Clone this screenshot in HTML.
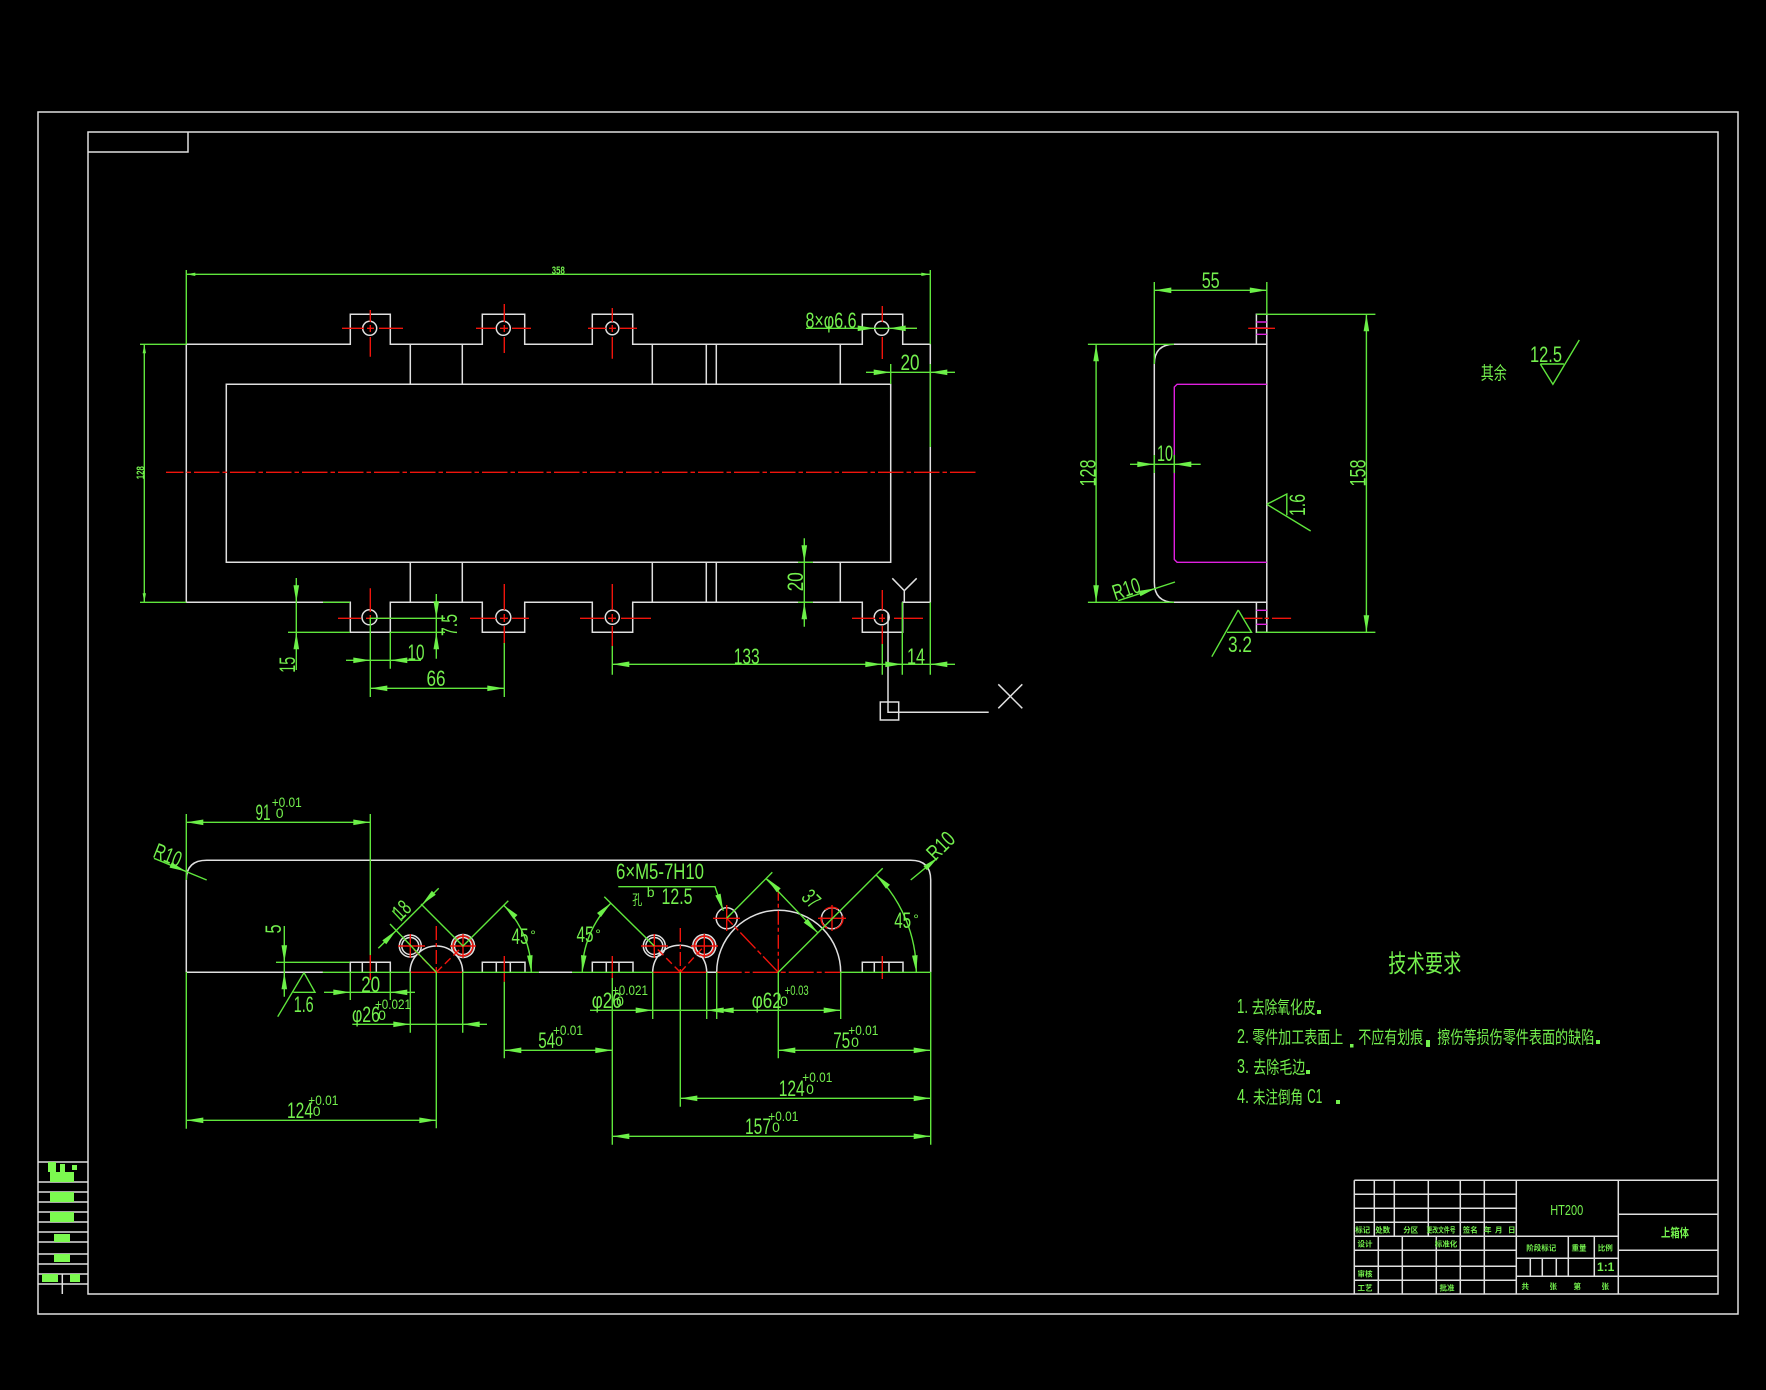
<!DOCTYPE html>
<html lang="zh">
<head>
<meta charset="utf-8">
<title>上箱体</title>
<style>
html,body{margin:0;padding:0;background:#000;width:1766px;height:1390px;overflow:hidden}
svg{display:block}
.w{stroke:#e0e0e0;stroke-width:1.5;fill:none}
.g{stroke:#5fe63c;stroke-width:1.4;fill:none}
.r{stroke:#f0140c;stroke-width:1.4;fill:none}
.m{stroke:#e020e0;stroke-width:1.4;fill:none}
text{font-family:"Liberation Sans","Noto Sans CJK SC",sans-serif;fill:#74f04e;font-size:22px;text-anchor:middle}
.s{font-size:14px}
.tb{font-size:7.5px;font-weight:bold}
.c{font-size:13px;text-anchor:start}
</style>
</head>
<body>
<svg width="1766" height="1390" viewBox="0 0 1766 1390" xmlns="http://www.w3.org/2000/svg">
<defs>
<path id="a" d="M0 0L-17 -2.8V2.8Z" fill="#6cf048"/>
<path id="b" d="M0 0L-9 -1.7V1.7Z" fill="#6cf048"/>
</defs>
<rect width="1766" height="1390" fill="#000"/>

<!-- frame -->
<path class="w" d="M38 112H1738V1314H38ZM88 132H1718V1294H88ZM88 152H188V132"/>
<path class="w" d="M38 1162H88M38 1182H88M38 1192H88M38 1202H88M38 1212H88M38 1222H88M38 1232H88M38 1242H88M38 1254H88M38 1264H88M38 1274H88M38 1284H88M62.3 1274V1294"/>
<g fill="#7cfa50">
<rect x="48" y="1162" width="8" height="10"/><rect x="50" y="1172" width="24" height="10"/><rect x="72" y="1165" width="5" height="5"/><rect x="60" y="1164" width="5" height="8"/>
<rect x="50" y="1192" width="24" height="10"/><rect x="50" y="1212" width="24" height="10"/><rect x="54" y="1234" width="16" height="8"/><rect x="54" y="1254" width="16" height="8"/><rect x="42" y="1274" width="16" height="8"/><rect x="70" y="1274" width="10" height="8"/>
</g>

<!-- top view white -->
<path class="w" d="M186.3 344.3H350.3V314.3H390.3V344.3H482.3V314.3H524.7V344.3H592.3V314.3H632.7V344.3H862.3V314.3H902.7V344.3H930.3V602.3H902.7V632.3H862.3V602.3H632.7V632.3H592.3V602.3H524.7V632.3H482.3V602.3H390.3V632.3H350.3V602.3H186.3Z"/>
<path class="w" d="M226.3 384.3H890.7V562.3H226.3Z"/>
<path class="w" d="M410.3 344.3V384.3M462.3 344.3V384.3M652.3 344.3V384.3M706.3 344.3V384.3M716.3 344.3V384.3M840.3 344.3V384.3M410.3 562.3V602.3M462.3 562.3V602.3M652.3 562.3V602.3M706.3 562.3V602.3M716.3 562.3V602.3M840.3 562.3V602.3"/>
<g class="w">
<circle cx="369.7" cy="328.3" r="7"/><circle cx="503.3" cy="328.3" r="7"/><circle cx="612.3" cy="328.3" r="6.5"/><circle cx="881.7" cy="328.3" r="7"/>
<circle cx="369.5" cy="617.3" r="7.5"/><circle cx="503.3" cy="617.3" r="7.5"/><circle cx="612.3" cy="617.3" r="7"/><circle cx="881.7" cy="617.3" r="7.5"/>
</g>
<!-- UCS -->
<path class="w" d="M888 612.7V712.3H988.7M880.3 702H898.7V720H880.3ZM998.3 684.3L1022.3 708.3M1022.3 684.3L998.3 708.3M892.3 578.3L904.3 590.7L916.7 578.3M904.3 590.7V602"/>

<!-- centre line + reds -->
<path class="r" stroke-dasharray="25.5 3 4.5 3" stroke-dashoffset="8" d="M166 472.3H976.7"/>
<path class="r" d="M342 328.3H364M367 328.3H374M379 328.3H403M370.3 310V322M370.3 325V332M370.3 337V356.7"/>
<path class="r" d="M476 328.3H496M500 328.3H508M512 328.3H531M504.3 304V322M504.3 325V332M504.3 337V353"/>
<path class="r" d="M588 328.3H606M609 328.3H616M620 328.3H637M612.3 308V322M612.3 325V332M612.3 337V358.7"/>
<path class="r" d="M882.3 306V322M882.3 337V359M905 328.3H917"/>
<path class="r" d="M338 618.3H361M366 618.3H376M380 618.3H390M370.3 588.3V612M370.3 615V622"/>
<path class="r" d="M470 618.3H496M500 618.3H508M512 618.3H529M504.3 584V610M504.3 614V622M504.3 626V644"/>
<path class="r" d="M580 618.3H604M608 618.3H616M621 618.3H651M612.3 584V610M612.3 614V622M612.3 626V646"/>
<path class="r" d="M852 618.3H875M879 618.3H885M894 618.3H923M882.3 590V610M882.3 614V622M882.3 626V644"/>

<!-- side view -->
<path class="w" d="M1266.8 344.3H1174.3Q1154.3 344.3 1154.3 364.3V582.3Q1154.3 602.3 1174.3 602.3H1266.8V344.3Z"/>
<path class="w" d="M1256.4 344.3V314.3H1266.8V344.3M1256.4 602.3V632.3H1266.8V602.3"/>
<path class="m" d="M1266.8 384.3H1177.1L1174.3 387V559.5L1177.1 562.3H1266.8M1256.4 322H1266.8M1256.4 334.3H1266.8M1256.4 328H1266.8M1256.4 610.3H1266.8M1256.4 624.3H1266.8"/>
<path class="r" d="M1248.2 328.3H1275M1244.3 618.3H1262.5M1264.6 618.3H1269M1272 618.3H1291.1"/>

<!-- bottom view white -->
<path class="w" d="M186.3 972.3V880Q186.3 860.3 206.7 860.3H910.7Q930.7 860.3 930.7 880V972.3"/>
<path class="w" d="M186.3 972.3H323M539 972.3H572M706.7 972.3H716.7"/>
<path class="w" d="M410 972.3A26.3 26.3 0 0 1 462.7 972.3M652.7 972.3A27 27 0 0 1 706.7 972.3M716.7 972.3A62 62 0 0 1 840.7 972.3"/>
<path class="w" d="M350.3 972.3V962.3H390.3V972.3M362.3 962.3V972.3M376.3 962.3V972.3M482.3 972.3V962.3H525V972.3M496.3 962.3V972.3M510.3 962.3V972.3M592.3 972.3V962.3H633V972.3M606.3 962.3V972.3M619 962.3V972.3M862.3 972.3V962.3H903V972.3M874.3 962.3V972.3M889 962.3V972.3"/>
<g class="w">
<circle cx="410.3" cy="946" r="11"/><circle cx="410.3" cy="946" r="8.5"/>
<circle cx="463" cy="946" r="11.5"/><circle cx="463" cy="946" r="8.5"/>
<circle cx="654.3" cy="946" r="11"/><circle cx="654.3" cy="946" r="8.5"/>
<circle cx="704.3" cy="946" r="11.5"/><circle cx="704.3" cy="946" r="8.5"/>
<circle cx="726.7" cy="918.3" r="10.5"/><circle cx="832" cy="918.3" r="10.5"/>
</g>
<g class="r">
<circle cx="463" cy="946" r="9.8"/><circle cx="704.3" cy="946" r="9.8"/><circle cx="832" cy="918.3" r="11" stroke-dasharray="14 8"/>
<path d="M398 946H425M410.3 934V958M450 946H476M463 934V958M641 946H668M654.3 934V958M691 946H718M704.3 934V958M713 918.3H740M726.7 905V931M818 918.3H846M832 905V931"/>
<path d="M370.3 955V980M504.3 956V981.7M612.3 956V978M882.3 956V979"/>
<path d="M410 972.3H462.7M652.7 972.3H706.7"/>
<path stroke-dasharray="25 3 5 3" d="M716.7 972.3H840.7"/>
<path stroke-dasharray="14 3 4 3" d="M436.3 926V972M680.3 928V972M778.3 886.7V972"/>
<path stroke-dasharray="8 4" d="M436.3 972.3L410.3 946M436.3 972.3L463 946M680.3 972.3L654.3 946M680.3 972.3L704.3 946"/>
<path stroke-dasharray="22 3 5 3" d="M778.3 972.3L726.7 918.3"/>
</g>

<!-- green: top view -->
<path class="g" d="M186.3 270V344.3M930.3 270V344.3M186.3 274.3H930.3M140 344.3H186.3M140 602.3H186.3M144.3 344.3V602.3"/>
<path class="g" d="M288 632.3H350M323 602.3H350M296.3 578V670M370.3 618.3H445M390.3 632.3H445M436.3 594V658.7M346 660.3H421M370.3 618V697M390.3 632V668.7M370.3 688.3H504.3M504.3 643V697"/>
<path class="g" d="M806 328.3H917M866 372.3H955M890.7 364V384M930.3 364V447M804.3 538.3V626.7M798 562.3H813M798 602.3H813M612.3 664.3H955M612.3 646V674.7M882.3 644V674.7M902.3 602.3V674.7M930.3 602.3V674.7"/>
<use href="#b" transform="translate(186.3 274.3) rotate(180)"/><use href="#b" transform="translate(930.3 274.3)"/>
<use href="#b" transform="translate(144.3 344.3) rotate(-90)"/><use href="#b" transform="translate(144.3 602.3) rotate(90)"/>
<use href="#a" transform="translate(296.3 602.3) rotate(90)"/><use href="#a" transform="translate(296.3 632.3) rotate(-90)"/>
<use href="#a" transform="translate(436.3 618.3) rotate(90)"/><use href="#a" transform="translate(436.3 632.3) rotate(-90)"/>
<use href="#a" transform="translate(370.3 660.3)"/><use href="#a" transform="translate(390.3 660.3) rotate(180)"/>
<use href="#a" transform="translate(370.3 688.3) rotate(180)"/><use href="#a" transform="translate(504.3 688.3)"/>
<use href="#a" transform="translate(874.7 328.3)"/><use href="#a" transform="translate(888.7 328.3) rotate(180)"/>
<use href="#a" transform="translate(890.7 372.3)"/><use href="#a" transform="translate(930.3 372.3) rotate(180)"/>
<use href="#a" transform="translate(804.3 562.3) rotate(90)"/><use href="#a" transform="translate(804.3 602.3) rotate(-90)"/>
<use href="#a" transform="translate(612.3 664.3) rotate(180)"/><use href="#a" transform="translate(882.3 664.3)"/>
<use href="#a" transform="translate(902.3 664.3)"/><use href="#a" transform="translate(930.3 664.3) rotate(180)"/>

<text x="558.3" y="274" style="font-size:11px;font-weight:bold" textLength="13" lengthAdjust="spacingAndGlyphs">358</text>
<text x="144" y="472.7" style="font-size:11px;font-weight:bold" transform="rotate(-90 144 472.7)" textLength="13" lengthAdjust="spacingAndGlyphs">128</text>
<text x="295" y="664.7" transform="rotate(-90 295 664.7)" textLength="16" lengthAdjust="spacingAndGlyphs">15</text>
<text x="457" y="625" transform="rotate(-90 457 625)" textLength="22" lengthAdjust="spacingAndGlyphs">7.5</text>
<text x="416" y="660" textLength="17" lengthAdjust="spacingAndGlyphs">10</text>
<text x="436" y="686" textLength="19" lengthAdjust="spacingAndGlyphs">66</text>
<text x="831" y="328" textLength="51" lengthAdjust="spacingAndGlyphs">8×φ6.6</text>
<text x="910" y="370" textLength="19" lengthAdjust="spacingAndGlyphs">20</text>
<text x="803" y="581.7" transform="rotate(-90 803 581.7)" textLength="19" lengthAdjust="spacingAndGlyphs">20</text>
<text x="746.7" y="664" textLength="26" lengthAdjust="spacingAndGlyphs">133</text>
<text x="916" y="664" textLength="18" lengthAdjust="spacingAndGlyphs">14</text>

<!-- green: side view -->
<path class="g" d="M1256.4 314.3H1375.4M1256.4 632.3H1375.4M1366.4 314.3V632.3M1087.9 344.3H1174M1087.9 602.3H1174M1096.1 344.3V602.3M1154.3 282V364M1266.8 282V314.3M1154.3 290.3H1266.8M1130 464.3H1200.7M1154.3 455V473M1174.3 455V473M1118.2 600.7L1175 582"/>
<path class="g" d="M1266.8 504.3L1286.8 494V515.3M1266.8 504.3L1310.7 531M1238.2 610L1211.8 656.7M1238.2 610L1251.5 632.3H1227"/>
<path class="g" d="M1540.3 364H1563.9M1540.3 364L1552.9 384.3L1579.3 340"/>
<use href="#a" transform="translate(1154.3 290.3) rotate(180)"/><use href="#a" transform="translate(1266.8 290.3)"/>
<use href="#a" transform="translate(1096.1 344.3) rotate(-90)"/><use href="#a" transform="translate(1096.1 602.3) rotate(90)"/>
<use href="#a" transform="translate(1366.4 314.3) rotate(-90)"/><use href="#a" transform="translate(1366.4 632.3) rotate(90)"/>
<use href="#a" transform="translate(1154.3 464.3)"/><use href="#a" transform="translate(1174.3 464.3) rotate(180)"/>
<use href="#a" transform="translate(1155.7 588.3) rotate(-18)"/>
<text x="1210.7" y="288" textLength="18" lengthAdjust="spacingAndGlyphs">55</text>
<text x="1165" y="461" textLength="16" lengthAdjust="spacingAndGlyphs">10</text>
<text x="1095.4" y="473" transform="rotate(-90 1095.4 473)" textLength="27" lengthAdjust="spacingAndGlyphs">128</text>
<text x="1365.4" y="473" transform="rotate(-90 1365.4 473)" textLength="27" lengthAdjust="spacingAndGlyphs">158</text>
<text x="1128.6" y="596" transform="rotate(-18 1128.6 596)" textLength="28" lengthAdjust="spacingAndGlyphs">R10</text>
<text x="1305" y="505" transform="rotate(-90 1305 505)" textLength="22" lengthAdjust="spacingAndGlyphs">1.6</text>
<text x="1240" y="652" textLength="24" lengthAdjust="spacingAndGlyphs">3.2</text>
<text x="1546" y="362" textLength="32" lengthAdjust="spacingAndGlyphs">12.5</text>
<text class="c" style="font-size:13px" transform="translate(1480.7 379.5) scale(1 1.4)" textLength="26" lengthAdjust="spacingAndGlyphs">其余</text>

<!-- green: bottom view -->
<path class="g" d="M322.7 972.3H410M462.7 972.3H539M572 972.3H652.7M840.7 972.3H930.7"/>
<path class="g" d="M186.3 814V880M370.3 814V955M186.3 822.3H370.3M154 858.3L206.7 880"/>
<path class="g" d="M284.3 926V996.7M276 962.3H350M324 992.3H415M350.3 972V1000M390.3 972V1000M304 972.7L277.7 1016.7M304 972.7L315 992.3H293.3"/>
<path class="g" d="M352.3 1024.3H487M410.3 972V1032.7M462.7 972V1032.7M436.3 972V1128.3M186.3 972V1128.7M186.3 1120.3H436.3"/>
<path class="g" d="M504.3 981.7V1058.3M504.3 1050.3H612.3M612.3 978V1144.7M612.3 1136.3H930.7M930.7 972V1144.7M778.3 972V1058.3M778.3 1050.3H930.7M680.3 972V1106.7M680.3 1098.3H930.7"/>
<path class="g" d="M590 1010.3H840.7M652.7 972V1019M706.7 972V1019M716.7 972V1019M840.7 972V1019"/>
<path class="g" d="M390 924L436.3 972.3M421 904L463 946L508.3 900.7M378.3 948.3L438.7 888.3M392.3 910.7L402 921"/>
<path class="g" d="M604.3 896.7L654.3 946M726.7 918.3L772.3 872.3M778.3 972.3L882.7 868.3M765.7 878.3L817.7 932.7M618.3 886.7H715L723.3 910.7M910.7 880L938.3 857.3"/>
<path class="g" d="M503.5 905A95 95 0 0 1 531.3 972.3M611 903A98 98 0 0 0 582.3 972.3M876 874.7A138 138 0 0 1 916.3 972.3"/>
<use href="#a" transform="translate(186.3 822.3) rotate(180)"/><use href="#a" transform="translate(370.3 822.3)"/>
<use href="#a" transform="translate(186.3 871.5) rotate(22.4)"/>
<use href="#a" transform="translate(284.3 962.3) rotate(90)"/><use href="#a" transform="translate(284.3 972.3) rotate(-90)"/>
<use href="#a" transform="translate(350.3 992.3)"/><use href="#a" transform="translate(390.3 992.3) rotate(180)"/>
<use href="#a" transform="translate(410.3 1024.3)"/><use href="#a" transform="translate(462.7 1024.3) rotate(180)"/>
<use href="#a" transform="translate(186.3 1120.3) rotate(180)"/><use href="#a" transform="translate(436.3 1120.3)"/>
<use href="#a" transform="translate(504.3 1050.3) rotate(180)"/><use href="#a" transform="translate(612.3 1050.3)"/>
<use href="#a" transform="translate(778.3 1050.3) rotate(180)"/><use href="#a" transform="translate(930.7 1050.3)"/>
<use href="#a" transform="translate(680.3 1098.3) rotate(180)"/><use href="#a" transform="translate(930.7 1098.3)"/>
<use href="#a" transform="translate(612.3 1136.3) rotate(180)"/><use href="#a" transform="translate(930.7 1136.3)"/>
<use href="#a" transform="translate(652.7 1010.3)"/><use href="#a" transform="translate(706.7 1010.3) rotate(180)"/>
<use href="#a" transform="translate(716.7 1010.3) rotate(180)"/><use href="#a" transform="translate(840.7 1010.3)"/>
<use href="#a" transform="translate(396.3 930.3) rotate(-45)"/><use href="#a" transform="translate(421.8 904.8) rotate(135)"/>
<use href="#a" transform="translate(503.5 905) rotate(-135)"/><use href="#a" transform="translate(531.3 972.3) rotate(85)"/>
<use href="#a" transform="translate(611 903) rotate(-45)"/><use href="#a" transform="translate(582.3 972.3) rotate(95)"/>
<use href="#a" transform="translate(876 874.7) rotate(-135)"/><use href="#a" transform="translate(916.3 972.3) rotate(85)"/>
<use href="#a" transform="translate(766.7 878.3) rotate(-135)"/><use href="#a" transform="translate(817.7 932.7) rotate(45)"/>
<use href="#a" transform="translate(723.3 910.7) rotate(71.6)"/>
<use href="#a" transform="translate(938.3 857.3) rotate(-39.6)"/>

<text x="263" y="820" textLength="15" lengthAdjust="spacingAndGlyphs">91</text>
<text class="s" x="286.7" y="807" textLength="30" lengthAdjust="spacingAndGlyphs">+0.01</text>
<text class="s" x="279.7" y="818">0</text>
<text x="165" y="862" transform="rotate(22 165 862)" textLength="28" lengthAdjust="spacingAndGlyphs">R10</text>
<text x="281" y="929" transform="rotate(-90 281 929)" textLength="9" lengthAdjust="spacingAndGlyphs">5</text>
<text x="303.7" y="1012" textLength="20" lengthAdjust="spacingAndGlyphs">1.6</text>
<text x="370.7" y="992" textLength="19" lengthAdjust="spacingAndGlyphs">20</text>
<text x="366" y="1022" textLength="28" lengthAdjust="spacingAndGlyphs">φ26</text>
<text class="s" x="393" y="1009" textLength="36" lengthAdjust="spacingAndGlyphs">+0.021</text>
<text class="s" x="382" y="1020">0</text>
<text x="407" y="915" transform="rotate(-45 407 915)" textLength="16" lengthAdjust="spacingAndGlyphs">18</text>
<text x="300" y="1118" textLength="26" lengthAdjust="spacingAndGlyphs">124</text>
<text class="s" x="323.3" y="1105" textLength="30" lengthAdjust="spacingAndGlyphs">+0.01</text>
<text class="s" x="316.7" y="1116">0</text>
<text x="546.7" y="1048" textLength="17" lengthAdjust="spacingAndGlyphs">54</text>
<text class="s" x="568" y="1035" textLength="30" lengthAdjust="spacingAndGlyphs">+0.01</text>
<text class="s" x="559" y="1046">0</text>
<text x="841.7" y="1048" textLength="17" lengthAdjust="spacingAndGlyphs">75</text>
<text class="s" x="863.3" y="1035" textLength="30" lengthAdjust="spacingAndGlyphs">+0.01</text>
<text class="s" x="855" y="1047">0</text>
<text x="791.7" y="1096" textLength="26" lengthAdjust="spacingAndGlyphs">124</text>
<text class="s" x="817.3" y="1082" textLength="30" lengthAdjust="spacingAndGlyphs">+0.01</text>
<text class="s" x="810" y="1094">0</text>
<text x="758" y="1134" textLength="26" lengthAdjust="spacingAndGlyphs">157</text>
<text class="s" x="783.3" y="1121" textLength="30" lengthAdjust="spacingAndGlyphs">+0.01</text>
<text class="s" x="776" y="1132">0</text>
<text x="606.7" y="1008" textLength="30" lengthAdjust="spacingAndGlyphs">φ26</text>
<text class="s" x="630" y="995" textLength="36" lengthAdjust="spacingAndGlyphs">+0.021</text>
<text class="s" x="620" y="1006">0</text>
<text x="766.7" y="1008" textLength="30" lengthAdjust="spacingAndGlyphs">φ62</text>
<text class="s" x="796.7" y="995" textLength="24" lengthAdjust="spacingAndGlyphs">+0.03</text>
<text class="s" x="784" y="1006">0</text>
<text x="520" y="944" textLength="17" lengthAdjust="spacingAndGlyphs">45</text>
<text class="s" x="533" y="940">°</text>
<text x="585" y="942" textLength="17" lengthAdjust="spacingAndGlyphs">45</text>
<text class="s" x="598" y="939">°</text>
<text x="902.7" y="928" textLength="17" lengthAdjust="spacingAndGlyphs">45</text>
<text class="s" x="916" y="924">°</text>
<text x="660" y="879" textLength="88" lengthAdjust="spacingAndGlyphs">6×M5-7H10</text>
<text class="s" x="637.3" y="905" textLength="10" lengthAdjust="spacingAndGlyphs">孔</text>
<text class="s" x="650.7" y="897">b</text>
<text x="677" y="904" textLength="31" lengthAdjust="spacingAndGlyphs">12.5</text>
<text x="806" y="904" transform="rotate(45 806 904)" textLength="16" lengthAdjust="spacingAndGlyphs">37</text>
<text x="946" y="851" transform="rotate(-45 946 851)" textLength="30" lengthAdjust="spacingAndGlyphs">R10</text>

<!-- tech requirements -->
<text class="c" style="font-size:18px" transform="translate(1388.3 972) scale(1 1.35)" textLength="73" lengthAdjust="spacing">技术要求</text>
<g>
<text class="c" x="1237" y="1013" textLength="11" lengthAdjust="spacingAndGlyphs" style="font-size:20px">1.</text>
<text class="c" transform="translate(1251.7 1013.5) scale(1 1.35)" textLength="64" lengthAdjust="spacingAndGlyphs">去除氧化皮</text>
<text class="c" x="1237" y="1043" textLength="12" lengthAdjust="spacingAndGlyphs" style="font-size:20px">2.</text>
<text class="c" transform="translate(1252.3 1043.5) scale(1 1.35)" textLength="91" lengthAdjust="spacingAndGlyphs">零件加工表面上</text>
<text class="c" transform="translate(1358.3 1043.5) scale(1 1.35)" textLength="65" lengthAdjust="spacingAndGlyphs">不应有划痕</text>
<text class="c" transform="translate(1437.3 1043.5) scale(1 1.35)" textLength="157" lengthAdjust="spacingAndGlyphs">擦伤等损伤零件表面的缺陷</text>
<text class="c" x="1237" y="1073" textLength="12" lengthAdjust="spacingAndGlyphs" style="font-size:20px">3.</text>
<text class="c" transform="translate(1253.3 1073.5) scale(1 1.35)" textLength="52" lengthAdjust="spacingAndGlyphs">去除毛边</text>
<text class="c" x="1237" y="1103" textLength="12" lengthAdjust="spacingAndGlyphs" style="font-size:20px">4.</text>
<text class="c" transform="translate(1253 1103.5) scale(1 1.35)" textLength="50" lengthAdjust="spacingAndGlyphs">未注倒角</text>
<text class="c" x="1307.3" y="1103" textLength="15" lengthAdjust="spacingAndGlyphs" style="font-size:20px">C1</text>
<g fill="#74f04e">
<rect x="1317" y="1010" width="4" height="4"/><rect x="1350" y="1044" width="3.5" height="3.5"/><rect x="1426" y="1040" width="4" height="7"/><rect x="1596" y="1040" width="4" height="4"/><rect x="1306" y="1070" width="4" height="4"/><rect x="1336" y="1100" width="4" height="4"/>
</g>
</g>

<!-- title block -->
<path class="w" d="M1354.3 1180.3H1718M1354.3 1194.3H1516.3M1354.3 1208.3H1516.3M1354.3 1222.3H1516.3M1354.3 1236.3H1618.3M1354.3 1250.3H1516.3M1354.3 1266.3H1516.3M1354.3 1280.3H1516.3"/>
<path class="w" d="M1354.3 1180.3V1294M1374.3 1180.3V1236.3M1394.3 1180.3V1236.3M1428.3 1180.3V1236.3M1460.3 1180.3V1294M1484.3 1180.3V1294M1516.3 1180.3V1294M1378.3 1236.3V1294M1402.3 1236.3V1294M1436.3 1236.3V1294M1618.3 1180.3V1294"/>
<path class="w" d="M1516.3 1258.3H1618.3M1516.3 1276.3H1718M1568.3 1236.3V1276.3M1594.3 1236.3V1276.3M1530.3 1258.3V1276.3M1542.3 1258.3V1276.3M1556.3 1258.3V1276.3M1618.3 1214.3H1718M1618.3 1250.3H1718"/>
<text x="1566.7" y="1215" textLength="33" lengthAdjust="spacingAndGlyphs" style="font-size:15px">HT200</text>
<text x="1675" y="1237" style="font-size:12px;font-weight:bold" textLength="28" lengthAdjust="spacingAndGlyphs">上箱体</text>
<g class="tb">
<text class="tb" x="1362.7" y="1232.5">标记</text><text class="tb" x="1382.7" y="1232.5">处数</text><text class="tb" x="1410.7" y="1232.5">分区</text><text class="tb" x="1441" y="1232.5" textLength="29" lengthAdjust="spacingAndGlyphs">更改文件号</text><text class="tb" x="1470.3" y="1232.5">签名</text><text class="tb" x="1487.7" y="1232.5">年</text><text class="tb" x="1498.7" y="1232.5">月</text><text class="tb" x="1511.7" y="1232.5">日</text>
<text class="tb" x="1365" y="1246.5">设计</text><text class="tb" x="1446" y="1246.5">标准化</text><text class="tb" x="1365" y="1276.5">审核</text><text class="tb" x="1365" y="1290.5">工艺</text><text class="tb" x="1447" y="1290.5">批准</text>
<text class="tb" x="1541.3" y="1250.5">阶段标记</text><text class="tb" x="1579" y="1250.5">重量</text><text class="tb" x="1605.3" y="1250.5">比例</text>
<text x="1605.7" y="1271" style="font-size:12px;font-weight:bold">1:1</text>
<text class="tb" x="1525.3" y="1288.8">共</text><text class="tb" x="1553.3" y="1288.8">张</text><text class="tb" x="1577.3" y="1288.8">第</text><text class="tb" x="1605.3" y="1288.8">张</text>
</g>
</svg>
</body>
</html>
